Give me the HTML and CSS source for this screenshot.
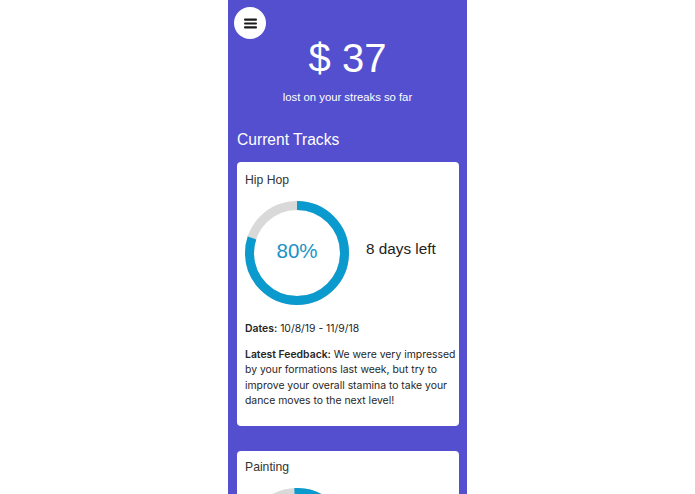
FILE: index.html
```html
<!DOCTYPE html>
<html lang="en">
<head>
<meta charset="utf-8">
<title>Streaks</title>
<link rel="stylesheet" href="styles.css">
</head>
<body>
<div class="phone">
  <button class="menu-btn" aria-label="Menu">
    <svg width="13" height="11" viewBox="0 0 13 11"><rect x="0" y="0.5" width="13" height="2.2" rx="1" fill="#1a1a1a"/><rect x="0" y="4.4" width="13" height="2.2" rx="1" fill="#1a1a1a"/><rect x="0" y="8.3" width="13" height="2.2" rx="1" fill="#1a1a1a"/></svg>
  </button>
  <div class="amount">$ 37</div>
  <div class="subtitle">lost on your streaks so far</div>
  <section class="tracks">
    <h2 class="tracks-title">Current Tracks</h2>
    <div class="card">
      <div class="card-title">Hip Hop</div>
      <div class="progress-row">
        <div class="ring">
          <svg width="104" height="104" viewBox="0 0 104 104">
            <circle cx="52" cy="52" r="47.5" fill="none" stroke="#d9d9d9" stroke-width="9"/>
            <circle cx="52" cy="52" r="47.5" fill="none" stroke="#0b9acd" stroke-width="9" stroke-dasharray="238.76 298.45" transform="rotate(-90 52 52)"/>
          </svg>
          <span class="ring-label">80%</span>
        </div>
        <div class="days-left">8 days left</div>
      </div>
      <p class="dates"><b>Dates:</b> 10/8/19 - 11/9/18</p>
      <p class="feedback"><b>Latest Feedback:</b> We were very impressed by your formations last week, but try to improve your overall stamina to take your dance moves to the next level!</p>
    </div>
    <div class="card">
      <div class="card-title">Painting</div>
      <div class="progress-row">
        <div class="ring">
          <svg width="104" height="104" viewBox="0 0 104 104">
            <circle cx="52" cy="52" r="47.5" fill="none" stroke="#d9d9d9" stroke-width="9"/>
            <circle cx="52" cy="52" r="47.5" fill="none" stroke="#0b9acd" stroke-width="9" stroke-dasharray="179 298.45" transform="rotate(-93 52 52)"/>
          </svg>
          <span class="ring-label">60%</span>
        </div>
        <div class="days-left">12 days left</div>
      </div>
    </div>
  </section>
</div>
</body>
</html>
```
FILE: styles.css
```css
html, body {
  margin: 0;
  padding: 0;
  background: #ffffff;
  height: 100%;
  overflow: hidden;
}
body {
  font-family: "Liberation Sans", Arial, Helvetica, sans-serif;
}
.phone {
  position: relative;
  width: 239px;
  margin: 0 auto;
  min-height: 494px;
  background: #534fcf;
  padding-top: 35px;
  box-sizing: border-box;
}
.menu-btn {
  position: absolute;
  left: 6px;
  top: 7px;
  width: 32px;
  height: 32px;
  border-radius: 50%;
  border: none;
  background: #ffffff;
  padding: 0;
  display: flex;
  align-items: center;
  justify-content: center;
}
.menu-btn svg { display: block; }
.amount {
  color: #ffffff;
  font-size: 40px;
  line-height: 46px;
  text-align: center;
}
.subtitle {
  color: #ffffff;
  font-size: 11.3px;
  line-height: 14px;
  text-align: center;
  margin-top: 9.3px;
}
.tracks {
  padding: 0 8px 0 9px;
}
.tracks-title {
  margin: 26.6px 0 0;
  font-size: 15.6px;
  line-height: 18px;
  font-weight: normal;
  color: #ffffff;
}
.card {
  background: #ffffff;
  border-radius: 4px;
  padding: 10.8px 3px 16.7px 8px;
  margin-top: 13.1px;
  color: #2a2a2a;
}
.card + .card {
  margin-top: 25px;
  padding-top: 9.8px;
}
.card-title {
  font-size: 12.2px;
  line-height: 15px;
  color: #333333;
}
.progress-row {
  display: flex;
  align-items: center;
  margin-top: 12.9px;
}
.ring {
  display: grid;
  width: 104px;
  height: 104px;
}
.ring svg, .ring-label {
  grid-area: 1 / 1;
}
.ring-label {
  align-self: center;
  justify-self: center;
  font-size: 20.5px;
  color: #1a93c6;
  margin-bottom: 4px;
}
.days-left {
  margin-left: 17px;
  margin-bottom: 8px;
  font-size: 15.3px;
  color: #222222;
}
.dates,
.feedback {
  font-family: Inter, "Liberation Sans", sans-serif;
  font-size: 10.4px;
  line-height: 15.5px;
  color: #262626;
}
.dates {
  margin: 16.7px 0 0;
}
.feedback {
  margin: 10.1px 0 0;
}
.dates b,
.feedback b {
  font-weight: 600;
}
```
